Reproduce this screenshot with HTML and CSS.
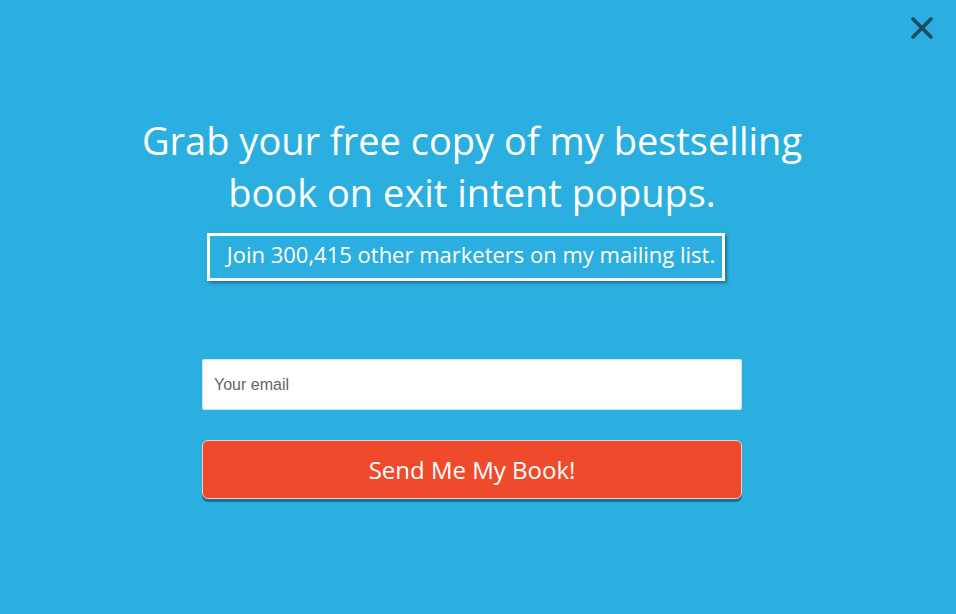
FILE: index.html
```html
<!DOCTYPE html>
<html lang="en">
<head>
    <meta charset="UTF-8">
    <meta name="viewport" content="width=device-width, initial-scale=1.0">
    <title>Free Book - Exit Intent Popup</title>
    <link rel="stylesheet" href="styles.css">
</head>
<body>
    <div class="popup">
        <!-- Close button -->
        <button class="close-btn" aria-label="Close">
            <svg width="24" height="24" viewBox="0 0 24 24">
                <path d="M3 3 L21 21 M21 3 L3 21" stroke="#1b4b61" stroke-width="3.6" stroke-linecap="round" fill="none"/>
            </svg>
        </button>

        <div class="content">
            <h1>Grab your free copy of my bestselling book on exit intent popups.</h1>
            <p class="subtitle">Join 300,415 other marketers on my mailing list.</p>

            <form class="signup">
                <input type="text" placeholder="Your email">
                <button type="submit" class="btn">Send Me My Book!</button>
            </form>
        </div>
    </div>
</body>
</html>
```

FILE: styles.css
```css
body {
    margin: 0;
    padding: 0;
    background-color: #2bafe0;
    font-family: "Open Sans", Arial, sans-serif;
    color: #fff;
}

.popup {
    position: relative;
    height: 614px;
    padding-right: 12px;
}

.close-btn {
    position: absolute;
    top: 16px;
    right: 22px;
    background: none;
    border: none;
    padding: 0;
    cursor: pointer;
}

.content {
    display: flex;
    flex-direction: column;
    align-items: center;
    padding-top: 114px;
}

h1 {
    font-size: 38px;
    font-weight: 400;
    line-height: 52px;
    text-align: center;
    max-width: 700px;
    margin: 0;
}

.subtitle {
    margin: 15px 0 0 0;
    font-size: 22px;
    line-height: 36px;
    padding: 0 7px 6px 17px;
    border: 3px solid #fff;
    box-shadow: 2px 2px 3px rgba(0, 0, 0, 0.35);
    position: relative;
    left: -6px;
}

.signup {
    display: flex;
    flex-direction: column;
    width: 540px;
    margin-top: 78px;
}

.signup input[type="text"] {
    box-sizing: border-box;
    height: 51px;
    padding: 0 11px;
    border: 1px solid #cfe6ef;
    border-radius: 2px;
    font-family: "Liberation Sans", Arial, sans-serif;
    font-size: 16px;
    color: #333;
}

.signup input::placeholder {
    color: #666;
}

.btn {
    margin-top: 30px;
    height: 59px;
    background-color: #f04a2d;
    color: #fff;
    border: 1px solid #f6c9bf;
    border-radius: 6px;
    box-shadow: 0 3px 0 rgba(15, 60, 80, 0.55);
    font-family: "Open Sans", Arial, sans-serif;
    font-size: 24px;
    cursor: pointer;
}
```
